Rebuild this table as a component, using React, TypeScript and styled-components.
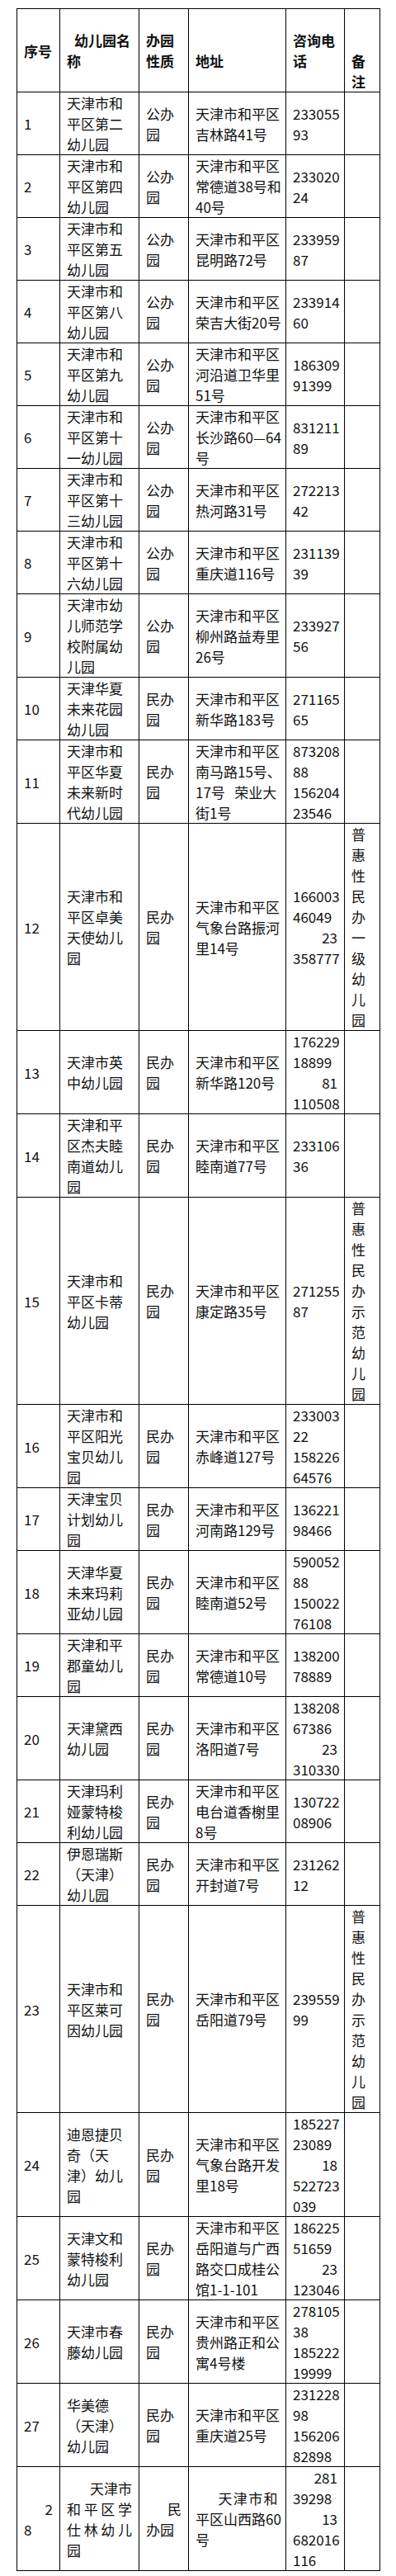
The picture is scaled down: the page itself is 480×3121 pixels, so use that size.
import React from 'react';
import styled, { createGlobalStyle } from 'styled-components';

type LineSpec = string | { t: string; a?: 'left' | 'right' | 'justify'; indent?: number; ls?: number };

interface RowData {
  no: LineSpec[];
  name: LineSpec[];
  kind: LineSpec[];
  addr: LineSpec[];
  phone: LineSpec[];
  note?: LineSpec[];
}

const Global = createGlobalStyle`
  html, body { margin: 0; padding: 0; background: #ffffff; }
  body {
    font-family: "Noto Sans CJK SC", "Noto Sans", "Liberation Sans", sans-serif;
    color: #111111;
  }
`;

const Page = styled.div`
  padding: 10px 20px 7px 20px;
`;

const Table = styled.table`
  border-collapse: collapse;
  table-layout: fixed;
  width: 441px;
  font-size: 17px;
  line-height: 25px;
`;

const Col = styled.col<{ $w: number }>`
  width: ${(p) => p.$w}px;
`;

const HeadCell = styled.th`
  border: 1px solid #000000;
  padding: 0 8px;
  font-weight: 700;
  text-align: left;
  vertical-align: middle;
`;

const Cell = styled.td`
  border: 1px solid #000000;
  padding: 0 8px;
  font-weight: 400;
  text-align: left;
  vertical-align: middle;
`;

const Line = styled.div<{ $align: string; $indent: number; $ls: number }>`
  height: 25px;
  white-space: nowrap;
  text-align: ${(p) => p.$align};
  padding-left: ${(p) => p.$indent}px;
  letter-spacing: ${(p) => p.$ls}px;
`;

const SpreadLine = styled.div`
  height: 25px;
  display: flex;
  justify-content: space-between;
  white-space: nowrap;
`;

const Lines: React.FC<{ lines: LineSpec[] }> = ({ lines }) => (
  <>
    {lines.map((l, i) => {
      const spec = typeof l === 'string' ? { t: l } : l;
      if (spec.a === 'justify') {
        return (
          <SpreadLine key={i}>
            {Array.from(spec.t).map((c, j) => (
              <span key={j}>{c}</span>
            ))}
          </SpreadLine>
        );
      }
      return (
        <Line key={i} $align={spec.a ?? 'left'} $indent={spec.indent ?? 0} $ls={spec.ls ?? 0}>
          {spec.t === '' ? '\u00a0' : spec.t}
        </Line>
      );
    })}
  </>
);

const s = (v: string): LineSpec[] => v.split('/');
const R = (t: string): LineSpec => ({ t, a: 'right' });
const vertical = (v: string): LineSpec[] => Array.from(v);

const PUB = s('公办/园');
const PRI = s('民办/园');

const rows: RowData[] = [
  { no: ['1'], name: s('天津市和/平区第二/幼儿园'), kind: PUB, addr: s('天津市和平区/吉林路41号'), phone: s('233055/93') },
  { no: ['2'], name: s('天津市和/平区第四/幼儿园'), kind: PUB, addr: s('天津市和平区/常德道38号和/40号'), phone: s('233020/24') },
  { no: ['3'], name: s('天津市和/平区第五/幼儿园'), kind: PUB, addr: s('天津市和平区/昆明路72号'), phone: s('233959/87') },
  { no: ['4'], name: s('天津市和/平区第八/幼儿园'), kind: PUB, addr: s('天津市和平区/荣吉大街20号'), phone: s('233914/60') },
  { no: ['5'], name: s('天津市和/平区第九/幼儿园'), kind: PUB, addr: s('天津市和平区/河沿道卫华里/51号'), phone: s('186309/91399') },
  { no: ['6'], name: s('天津市和/平区第十/一幼儿园'), kind: PUB, addr: s('天津市和平区/长沙路60—64/号'), phone: s('831211/89') },
  { no: ['7'], name: s('天津市和/平区第十/三幼儿园'), kind: PUB, addr: s('天津市和平区/热河路31号'), phone: s('272213/42') },
  { no: ['8'], name: s('天津市和/平区第十/六幼儿园'), kind: PUB, addr: s('天津市和平区/重庆道116号'), phone: s('231139/39') },
  { no: ['9'], name: s('天津市幼/儿师范学/校附属幼/儿园'), kind: PUB, addr: s('天津市和平区/柳州路益寿里/26号'), phone: s('233927/56') },
  { no: ['10'], name: s('天津华夏/未来花园/幼儿园'), kind: PRI, addr: s('天津市和平区/新华路183号'), phone: s('271165/65') },
  {
    no: ['11'],
    name: s('天津市和/平区华夏/未来新时/代幼儿园'),
    kind: PRI,
    addr: ['天津市和平区', '南马路15号、', '17号\u00a0\u00a0\u00a0荣业大', '街1号'],
    phone: s('873208/88/156204/23546'),
  },
  {
    no: ['12'],
    name: s('天津市和/平区卓美/天使幼儿/园'),
    kind: PRI,
    addr: s('天津市和平区/气象台路振河/里14号'),
    phone: ['166003', '46049', R('23'), '358777'],
    note: vertical('普惠性民办一级幼儿园'),
  },
  { no: ['13'], name: s('天津市英/中幼儿园'), kind: PRI, addr: s('天津市和平区/新华路120号'), phone: ['176229', '18899', R('81'), '110508'] },
  { no: ['14'], name: s('天津和平/区杰夫睦/南道幼儿/园'), kind: PRI, addr: s('天津市和平区/睦南道77号'), phone: s('233106/36') },
  {
    no: ['15'],
    name: s('天津市和/平区卡蒂/幼儿园'),
    kind: PRI,
    addr: s('天津市和平区/康定路35号'),
    phone: s('271255/87'),
    note: vertical('普惠性民办示范幼儿园'),
  },
  { no: ['16'], name: s('天津市和/平区阳光/宝贝幼儿/园'), kind: PRI, addr: s('天津市和平区/赤峰道127号'), phone: s('233003/22/158226/64576') },
  { no: ['17'], name: s('天津宝贝/计划幼儿/园'), kind: PRI, addr: s('天津市和平区/河南路129号'), phone: s('136221/98466') },
  { no: ['18'], name: s('天津华夏/未来玛莉/亚幼儿园'), kind: PRI, addr: s('天津市和平区/睦南道52号'), phone: s('590052/88/150022/76108') },
  { no: ['19'], name: s('天津和平/郡童幼儿/园'), kind: PRI, addr: s('天津市和平区/常德道10号'), phone: s('138200/78889') },
  { no: ['20'], name: s('天津黛西/幼儿园'), kind: PRI, addr: s('天津市和平区/洛阳道7号'), phone: ['138208', '67386', R('23'), '310330'] },
  { no: ['21'], name: s('天津玛利/娅蒙特梭/利幼儿园'), kind: PRI, addr: s('天津市和平区/电台道香榭里/8号'), phone: s('130722/08906') },
  { no: ['22'], name: s('伊恩瑞斯/（天津）/幼儿园'), kind: PRI, addr: s('天津市和平区/开封道7号'), phone: s('231262/12') },
  {
    no: ['23'],
    name: s('天津市和/平区莱可/因幼儿园'),
    kind: PRI,
    addr: s('天津市和平区/岳阳道79号'),
    phone: s('239559/99'),
    note: vertical('普惠性民办示范幼儿园'),
  },
  {
    no: ['24'],
    name: s('迪恩捷贝/奇（天/津）幼儿/园'),
    kind: PRI,
    addr: s('天津市和平区/气象台路开发/里18号'),
    phone: ['185227', '23089', R('18'), '522723', '039'],
  },
  {
    no: ['25'],
    name: s('天津文和/蒙特梭利/幼儿园'),
    kind: PRI,
    addr: s('天津市和平区/岳阳道与广西/路交口成桂公/馆1-1-101'),
    phone: ['186225', '51659', R('23'), '123046'],
  },
  { no: ['26'], name: s('天津市春/藤幼儿园'), kind: PRI, addr: s('天津市和平区/贵州路正和公/寓4号楼'), phone: s('278105/38/185222/19999') },
  { no: ['27'], name: s('华美德/（天津）/幼儿园'), kind: PRI, addr: s('天津市和平区/重庆道25号'), phone: s('231228/98/156206/82898') },
  {
    no: [R('2'), '8'],
    name: [R('天津市'), { t: '和平区学', a: 'justify' }, { t: '仕林幼儿', a: 'justify' }, '园'],
    kind: [R('民'), '办园'],
    addr: [{ t: '天津市和', a: 'right', ls: 1.4 }, '平区山西路60', '号'],
    phone: [R('281'), '39298', R('13'), '682016', '116'],
  },
];

const header: LineSpec[][] = [
  ['序号'],
  [{ t: '幼儿园名', indent: 9 }, '称'],
  ['办园', '性质'],
  ['', '地址'],
  ['咨询电', '话'],
  ['', '', '备', '注'],
];

const widths = [52, 96, 60, 118, 71, 43];

export default function App() {
  return (
    <>
      <Global />
      <Page>
        <Table>
          <colgroup>
            {widths.map((w, i) => (
              <Col key={i} $w={w} />
            ))}
          </colgroup>
          <thead>
            <tr>
              {header.map((h, i) => (
                <HeadCell key={i}>
                  <Lines lines={h} />
                </HeadCell>
              ))}
            </tr>
          </thead>
          <tbody>
            {rows.map((r, i) => (
              <tr key={i}>
                <Cell><Lines lines={r.no} /></Cell>
                <Cell><Lines lines={r.name} /></Cell>
                <Cell><Lines lines={r.kind} /></Cell>
                <Cell><Lines lines={r.addr} /></Cell>
                <Cell><Lines lines={r.phone} /></Cell>
                <Cell><Lines lines={r.note ?? []} /></Cell>
              </tr>
            ))}
          </tbody>
        </Table>
      </Page>
    </>
  );
}
